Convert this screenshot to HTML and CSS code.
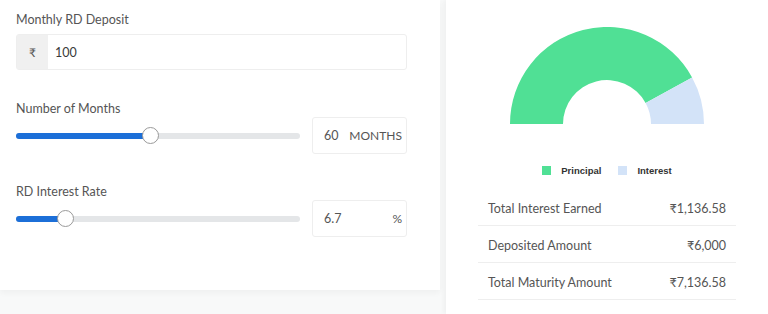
FILE: index.html
```html
<!DOCTYPE html>
<html lang="en">
<head>
  <meta charset="UTF-8">
  <meta name="viewport" content="width=device-width, initial-scale=1.0">
  <title>RD Calculator</title>
  <link rel="stylesheet" href="styles.css">
</head>
<body>
  <div class="calculator">
    <div class="inputs">
      <div class="field">
        <label class="field-label">Monthly RD Deposit</label>
        <div class="amount-box">
          <span class="prefix">₹</span>
          <span class="amount">100</span>
        </div>
      </div>

      <div class="field slider-field">
        <label class="field-label">Number of Months</label>
        <div class="slider-row">
          <div class="slider">
            <div class="track"></div>
            <div class="fill" style="width: 135px"></div>
            <div class="thumb" style="left: 135px"></div>
          </div>
          <div class="value-box">
            <span>60</span>
            <span class="unit">MONTHS</span>
          </div>
        </div>
      </div>

      <div class="field slider-field">
        <label class="field-label">RD Interest Rate</label>
        <div class="slider-row">
          <div class="slider">
            <div class="track"></div>
            <div class="fill" style="width: 50px"></div>
            <div class="thumb" style="left: 50px"></div>
          </div>
          <div class="value-box">
            <span>6.7</span>
            <span class="unit">%</span>
          </div>
        </div>
      </div>
    </div>

    <div class="results">
      <svg class="donut" width="194" height="97" viewBox="0 0 194 97">
        <path d="M0 97 A97 97 0 0 1 182.1 50.4 L135.6 75.9 A44 44 0 0 0 53 97 Z" fill="#50e095"/>
        <path d="M182.1 50.4 A97 97 0 0 1 194 97 L141 97 A44 44 0 0 0 135.6 75.9 Z" fill="#d3e3f8"/>
      </svg>

      <div class="legend">
        <span class="legend-item"><i class="swatch principal"></i>Principal</span>
        <span class="legend-item"><i class="swatch interest"></i>Interest</span>
      </div>

      <div class="summary">
        <div class="row">
          <span>Total Interest Earned</span>
          <span>₹1,136.58</span>
        </div>
        <div class="row">
          <span>Deposited Amount</span>
          <span>₹6,000</span>
        </div>
        <div class="row">
          <span>Total Maturity Amount</span>
          <span>₹7,136.58</span>
        </div>
      </div>
    </div>
  </div>
</body>
</html>
```

FILE: styles.css
```css
body {
  margin: 0;
  padding: 0;
  background: #f8f9f9;
  font-family: Lato, "Open Sans", sans-serif;
  color: #555;
}

.calculator {
  display: flex;
  height: 314px;
}

.inputs {
  width: 440px;
  height: 290px;
  box-sizing: border-box;
  padding: 12px 33px 0 16px;
  background: #fff;
  box-shadow: 0 3px 6px rgba(0, 0, 0, 0.04);
}

.field-label {
  display: block;
  font-size: 12.5px;
  line-height: 16px;
  color: #555;
}

.field {
  margin-bottom: 31px;
}

.amount-box {
  display: flex;
  margin-top: 6px;
  height: 36px;
  border: 1px solid #eeeeee;
  border-radius: 3px;
  box-sizing: border-box;
  font-size: 12.5px;
  color: #3a3a3a;
}

.prefix {
  display: flex;
  align-items: center;
  justify-content: center;
  width: 31px;
  background: #f0f0f0;
  color: #555;
  font-size: 12px;
}

.amount {
  display: flex;
  align-items: center;
  padding-left: 7px;
}

.slider-field {
  margin-bottom: 30px;
}

.slider-row {
  display: flex;
  align-items: center;
  justify-content: space-between;
}

.slider {
  position: relative;
  width: 284px;
  height: 6px;
}

.track {
  height: 6px;
  border-radius: 3px;
  background: #e4e6e8;
}

.fill {
  position: absolute;
  top: 0;
  left: 0;
  height: 6px;
  border-radius: 3px;
  background: #1c6fd8;
}

.thumb {
  position: absolute;
  top: -6px;
  width: 17px;
  height: 17px;
  margin-left: -9px;
  border-radius: 50%;
  background: #fff;
  border: 1px solid #9a9a9a;
  box-sizing: border-box;
}

.value-box {
  display: flex;
  align-items: center;
  justify-content: space-between;
  width: 95px;
  height: 37px;
  box-sizing: border-box;
  padding: 0 4px 0 11px;
  border: 1px solid #eeeeee;
  border-radius: 3px;
  font-size: 12.5px;
  color: #555;
}

.unit {
  font-size: 12px;
}

.results {
  flex: 1;
  margin-left: 6px;
  background: #fff;
  box-shadow: -3px 0 4px rgba(0, 0, 0, 0.03);
  display: flex;
  flex-direction: column;
  align-items: center;
  padding-top: 27px;
}

.donut {
  display: block;
}

.legend {
  display: flex;
  gap: 17px;
  margin-top: 41px;
  font-family: "Liberation Sans", Arial, sans-serif;
  font-size: 9.5px;
  font-weight: bold;
  color: #333;
}

.legend-item {
  display: flex;
  align-items: center;
}

.swatch {
  width: 9px;
  height: 9px;
  margin-right: 10px;
}

.swatch.principal {
  background: #50e095;
}

.swatch.interest {
  background: #d3e3f8;
}

.summary {
  width: 258px;
  margin-top: 13px;
}

.row {
  display: flex;
  justify-content: space-between;
  padding: 3px 10px 0 10px;
  height: 37px;
  box-sizing: border-box;
  align-items: center;
  border-bottom: 1px solid #eeeeee;
  font-size: 12.5px;
  color: #555;
}
```
